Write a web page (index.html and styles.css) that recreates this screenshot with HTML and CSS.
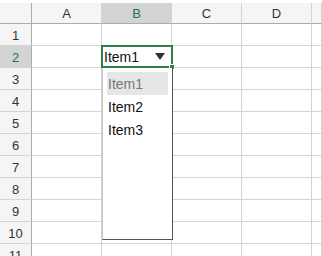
FILE: index.html
```html
<!DOCTYPE html>
<html lang="en">
<head>
  <meta charset="UTF-8">
  <title>Sheet</title>
  <link rel="stylesheet" href="styles.css">
</head>
<body>
  <div class="sheet">
    <div class="grid">
      <!-- header row -->
      <div class="corner"></div>
      <div class="col-head">A</div>
      <div class="col-head active">B</div>
      <div class="col-head">C</div>
      <div class="col-head">D</div>
      <div class="col-head last"></div>

      <div class="row-head">1</div><div class="cell"></div><div class="cell"></div><div class="cell"></div><div class="cell"></div><div class="cell last"></div>
      <div class="row-head active">2</div><div class="cell"></div><div class="cell"></div><div class="cell"></div><div class="cell"></div><div class="cell last"></div>
      <div class="row-head">3</div><div class="cell"></div><div class="cell"></div><div class="cell"></div><div class="cell"></div><div class="cell last"></div>
      <div class="row-head">4</div><div class="cell"></div><div class="cell"></div><div class="cell"></div><div class="cell"></div><div class="cell last"></div>
      <div class="row-head">5</div><div class="cell"></div><div class="cell"></div><div class="cell"></div><div class="cell"></div><div class="cell last"></div>
      <div class="row-head">6</div><div class="cell"></div><div class="cell"></div><div class="cell"></div><div class="cell"></div><div class="cell last"></div>
      <div class="row-head">7</div><div class="cell"></div><div class="cell"></div><div class="cell"></div><div class="cell"></div><div class="cell last"></div>
      <div class="row-head">8</div><div class="cell"></div><div class="cell"></div><div class="cell"></div><div class="cell"></div><div class="cell last"></div>
      <div class="row-head">9</div><div class="cell"></div><div class="cell"></div><div class="cell"></div><div class="cell"></div><div class="cell last"></div>
      <div class="row-head">10</div><div class="cell"></div><div class="cell"></div><div class="cell"></div><div class="cell"></div><div class="cell last"></div>
      <div class="row-head">11</div><div class="cell"></div><div class="cell"></div><div class="cell"></div><div class="cell"></div><div class="cell last"></div>
    </div>

    <!-- selected cell B2 with dropdown -->
    <div class="selection">
      <span class="value">Item1</span>
      <svg class="arrow" width="10" height="7" viewBox="0 0 10 7"><polygon points="0,0 10,0 5,7" fill="#333"/></svg>
      <span class="handle"></span>
    </div>

    <div class="dropdown">
      <div class="option current">Item1</div>
      <div class="option">Item2</div>
      <div class="option">Item3</div>
    </div>
  </div>
</body>
</html>
```

FILE: styles.css
```css
body {
  margin: 0;
  background: #fff;
  font-family: "Liberation Sans", Arial, sans-serif;
  font-size: 13px;
  color: #222;
  overflow: hidden;
}

.sheet {
  position: relative;
  width: 322px;
  height: 256px;
  overflow: hidden;
  padding-top: 3px;
  box-sizing: border-box;
}

.grid {
  display: grid;
  grid-template-columns: 32px 70px 70px 70px 70px 10px;
  grid-template-rows: 21px repeat(11, 22px);
}

.grid > div {
  box-sizing: border-box;
  border-right: 1px solid #d4d4d4;
  border-bottom: 1px solid #d4d4d4;
}

.corner,
.col-head,
.row-head {
  background: #f5f5f5;
  display: flex;
  align-items: center;
  justify-content: center;
  color: #333;
}

.grid > .corner,
.grid > .col-head {
  border-bottom: 1px solid #ababab;
}

.grid > .corner,
.grid > .row-head {
  border-right: 1px solid #ababab;
}

.col-head.active,
.row-head.active {
  background: #d3d3d3;
  color: #217346;
}

.row-head {
  padding-top: 1px;
}

.cell {
  background: #fff;
}

.selection {
  position: absolute;
  left: 101px;
  top: 45px;
  width: 72px;
  height: 23px;
  box-sizing: border-box;
  border: 2px solid #2e7d4f;
  background: #fff;
  display: flex;
  align-items: center;
  justify-content: space-between;
  padding: 0 6px 0 1px;
  font-size: 14px;
  color: #111;
}

.arrow {
  display: block;
}

.handle {
  position: absolute;
  right: -4px;
  bottom: -4px;
  width: 4px;
  height: 4px;
  background: #2e7d4f;
  border: 1px solid #fff;
}

.dropdown {
  position: absolute;
  left: 102px;
  top: 68px;
  width: 71px;
  height: 172px;
  box-sizing: border-box;
  background: #fff;
  border-left: 1px solid #c6c6c6;
  border-right: 1px solid #555;
  border-bottom: 1px solid #555;
  padding: 4px 4px 0 4px;
  font-size: 14px;
}

.option {
  height: 23px;
  line-height: 24px;
  padding-left: 1px;
  color: #111;
}

.option.current {
  background: #e6e6e6;
  color: #777;
}
```
